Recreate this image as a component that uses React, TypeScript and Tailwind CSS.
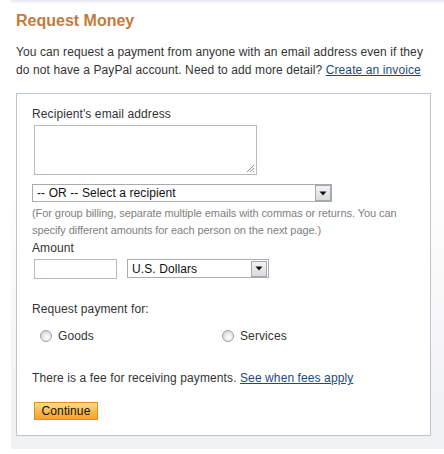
import React from "react";

function Arrow() {
  return (
    <div className="w-[16px] h-[16px] mr-[1px] border border-[#a3a8ad] bg-[linear-gradient(to_bottom,#f4f4f4,#d9dadb)] flex items-center justify-center">
      <svg width="8" height="5" viewBox="0 0 8 5">
        <path d="M0.5 0.5 H7.5 L4 4.5 Z" fill="#111" />
      </svg>
    </div>
  );
}

function Radio() {
  return (
    <div className="w-[12px] h-[12px] rounded-full border border-[#9aa0a5] bg-[radial-gradient(circle_at_60%_65%,#ffffff_0%,#e9e9e9_45%,#c8c8c8_100%)]" />
  );
}

export default function App() {
  return (
    <div className="w-[444px] h-[454px] bg-white font-['Liberation_Sans',Arial,sans-serif] text-[#333]">
      <div className="ml-[11px] w-[433px] h-[449px] bg-[linear-gradient(to_bottom,#ffffff_0%,#ffffff_40%,#f1f2f4_90%,#f1f2f4_100%)]">
        <div className="h-[4px] bg-[linear-gradient(to_bottom,#e3e8ee,#ffffff)]" />
        <div className="pl-[5px]">
          <h1 className="mt-[8px] text-[16px] leading-[18px] font-bold text-[#c27b3e]">
            Request Money
          </h1>
          <p className="mt-[13px] text-[12px] leading-[18px] tracking-[0.1px] whitespace-nowrap">
            You can request a payment from anyone with an email address even if they
            <br />
            do not have a PayPal account. Need to add more detail?{" "}
            <span className="underline text-[#1d4a7b]">Create an invoice</span>
          </p>
          <div className="mt-[14px] w-[415px] h-[343px] border border-[#b9c5d0] bg-white pt-[11px] pl-[15px] tracking-[0.1px]">
            <div className="text-[12px] leading-[18px]">Recipient's email address</div>
            <div className="relative mt-[2px] ml-[2px] w-[223px] h-[50px] border border-[#b4bcc4] bg-white">
              <svg className="absolute right-[1px] bottom-[1px]" width="9" height="9" viewBox="0 0 9 9">
                <path d="M8 1 L1 8 M8 4 L4 8 M8 7 L7 8" stroke="#8a8a8a" strokeWidth="1" />
              </svg>
            </div>
            <div className="mt-[9px] w-[300px] h-[18px] border border-[#a5acb2] bg-white flex items-center justify-between">
              <span className="pl-[4px] text-[12px] leading-[16px] text-[#111]">-- OR -- Select a recipient</span>
              <div className="h-full flex items-center">
                <div className="w-[16px] h-[16px] border border-[#a3a8ad] bg-[linear-gradient(to_bottom,#f4f4f4,#d9dadb)] flex items-center justify-center">
                  <svg width="8" height="5" viewBox="0 0 8 5">
                    <path d="M0.5 0.5 H7.5 L4 4.5 Z" fill="#111" />
                  </svg>
                </div>
              </div>
            </div>
            <p className="mt-[3px] text-[11px] leading-[17px] text-[#808080] whitespace-nowrap tracking-[-0.07px]">
              (For group billing, separate multiple emails with commas or returns. You can
              <br />
              specify different amounts for each person on the next page.)
            </p>
            <div className="text-[12px] leading-[18px]">Amount</div>
            <div className="mt-[2px] flex items-start">
              <div className="ml-[2px] w-[83px] h-[20px] border border-[#b4bcc4] bg-white" />
              <div className="ml-[10px] w-[142px] h-[19px] border border-[#a5acb2] bg-white flex items-center justify-between">
                <span className="pl-[4px] text-[12px] leading-[16px] text-[#111]">U.S. Dollars</span>
                <Arrow />
              </div>
            </div>
            <div className="mt-[21px] text-[12px] leading-[18px]">Request payment for:</div>
            <div className="mt-[9px] h-[18px] flex items-center text-[12px] leading-[18px]">
              <div className="ml-[8px] flex items-center w-[182px]">
                <Radio />
                <span className="ml-[6px]">Goods</span>
              </div>
              <div className="flex items-center">
                <Radio />
                <span className="ml-[6px]">Services</span>
              </div>
            </div>
            <p className="mt-[24px] text-[12px] leading-[18px] whitespace-nowrap">
              There is a fee for receiving payments.{" "}
              <span className="underline text-[#1d4a7b]">See when fees apply</span>
            </p>
            <div className="mt-[15px] ml-[2px] w-[64px] h-[18px] border border-[#d98f22] bg-[linear-gradient(to_bottom,#ffdc93_0%,#fbbb4e_50%,#f6a423_100%)] flex items-center justify-center text-[12px] leading-[16px] text-[#111]">
              Continue
            </div>
          </div>
        </div>
      </div>
    </div>
  );
}
